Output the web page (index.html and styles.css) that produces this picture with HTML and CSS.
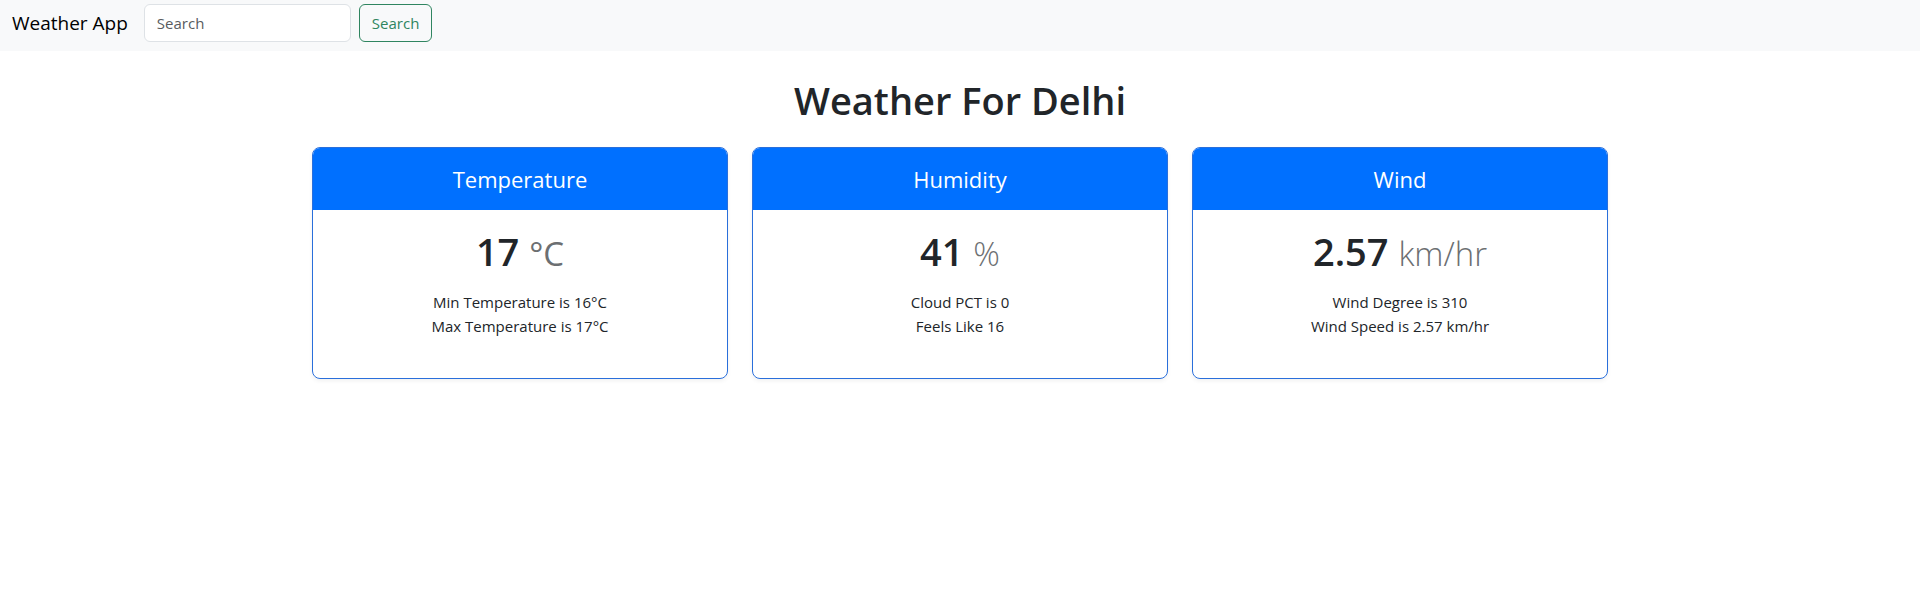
FILE: index.html
```html
<!DOCTYPE html>
<html lang="en">
<head>
<meta charset="utf-8">
<meta name="viewport" content="width=device-width, initial-scale=1">
<title>Weather App</title>
<link rel="stylesheet" href="styles.css">
</head>
<body>
<nav class="navbar">
  <a class="brand" href="#">Weather App</a>
  <form class="search" role="search">
    <input class="search-input" type="search" placeholder="Search" aria-label="Search">
    <button class="search-button" type="submit">Search</button>
  </form>
</nav>
<main class="container">
  <h1 class="title">Weather For Delhi</h1>
  <div class="cards">
    <section class="card">
      <h4 class="card-header">Temperature</h4>
      <div class="card-body">
        <h2 class="value">17 <small class="unit unit-regular">°C</small></h2>
        <ul class="details">
          <li>Min Temperature is 16°C</li>
          <li>Max Temperature is 17°C</li>
        </ul>
      </div>
    </section>
    <section class="card">
      <h4 class="card-header">Humidity</h4>
      <div class="card-body">
        <h2 class="value">41 <small class="unit">%</small></h2>
        <ul class="details">
          <li>Cloud PCT is 0</li>
          <li>Feels Like 16</li>
        </ul>
      </div>
    </section>
    <section class="card">
      <h4 class="card-header">Wind</h4>
      <div class="card-body">
        <h2 class="value">2.57 <small class="unit">km/hr</small></h2>
        <ul class="details">
          <li>Wind Degree is 310</li>
          <li>Wind Speed is 2.57 km/hr</li>
        </ul>
      </div>
    </section>
  </div>
</main>
</body>
</html>
```
FILE: styles.css
```css
* { box-sizing: border-box; }
body {
  margin: 0;
  font-family: "Open Sans", "Noto Sans", sans-serif;
  font-size: 15px;
  line-height: 24px;
  color: #212529;
  background: #fff;
}
.navbar {
  display: flex;
  align-items: center;
  gap: 16px;
  padding: 4px 12px 9px;
  background: #f8f9fa;
}
.brand { font-size: 19px; line-height: 30px; color: #000; text-decoration: none; }
.search { display: flex; gap: 8px; }
.search-input,
.search-button {
  font: inherit;
  padding: 6px 12px;
  border: 1px solid #dee2e6;
  border-radius: 6px;
  background: #fff;
}
.search-input { width: 207px; }
.search-input::placeholder { color: #595c5f; }
.search-button { color: #2f8560; border-color: #2f8560; background: transparent; }
.container { max-width: 1320px; margin: 0 auto; padding: 25px 12px; }
.title { margin: 0 0 23px; font-size: 38px; line-height: 48px; font-weight: 600; text-align: center; }
.cards { display: grid; grid-template-columns: repeat(3, 1fr); gap: 24px; text-align: center; }
.card { border: 1px solid #2a6fdb; border-radius: 8px; overflow: hidden; box-shadow: 0 2px 4px rgba(0, 0, 0, 0.06); }
.card-header { margin: 0; padding: 16px; font-size: 22px; line-height: 30px; font-weight: 400; color: #fff; background: #0070ff; }
.card-body { padding: 17px 16px; }
.value { margin: 0; font-size: 38px; line-height: 48px; font-weight: 600; }
.unit { font-size: 33px; line-height: 1; font-weight: 300; color: #6c6f72; }
.unit-regular { font-weight: 400; }
.details { margin: 15px 0 23px; padding: 0; list-style: none; }
```
